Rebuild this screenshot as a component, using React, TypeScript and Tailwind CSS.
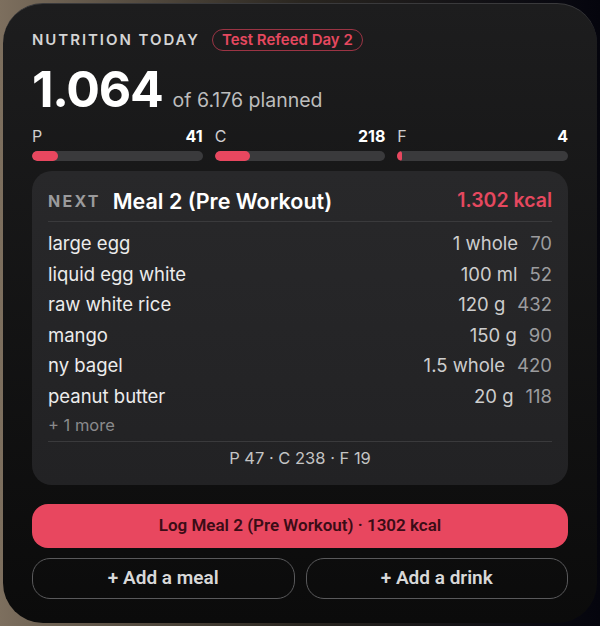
const macros = [
  { label: "P", value: 41, pct: 15 },
  { label: "C", value: 218, pct: 21 },
  { label: "F", value: 4, pct: 3 },
];

const items = [
  { name: "large egg", qty: "1 whole", kcal: 70 },
  { name: "liquid egg white", qty: "100 ml", kcal: 52 },
  { name: "raw white rice", qty: "120 g", kcal: 432 },
  { name: "mango", qty: "150 g", kcal: 90 },
  { name: "ny bagel", qty: "1.5 whole", kcal: 420 },
  { name: "peanut butter", qty: "20 g", kcal: 118 },
];

export default function App() {
  return (
    <div className="w-[600px] h-[626px] p-[3px] bg-linear-to-r from-[#7d6f5e] via-[#2a2620] to-[#05050d] font-['Inter',sans-serif]">
      <div className="h-full rounded-[40px] bg-linear-to-b from-[#1d1d1e] to-[#0b0b0b] border-t border-[#3a3a3c] px-[29px] pt-[25px]">
        {/* Header */}
        <div className="flex items-center gap-3">
          <span className="text-[15px] leading-[22px] font-semibold tracking-[0.13em] text-[#d4d4d4]">
            NUTRITION TODAY
          </span>
          <span className="h-[22px] px-[9px] flex items-center rounded-full border border-[#9b3444] text-[15px] font-semibold text-[#e5485f]">
            Test Refeed Day 2
          </span>
        </div>

        {/* Totals */}
        <div className="mt-[13px] flex items-baseline gap-[10px]">
          <span className="text-[50px] leading-[50px] font-bold text-white tracking-[-0.025em]">
            1.064
          </span>
          <span className="text-[19.5px] text-[#bdbdbd]">of 6.176 planned</span>
        </div>

        {/* Macro bars */}
        <div className="mt-[11px] grid grid-cols-3 gap-3">
          {macros.map((m) => (
            <div key={m.label}>
              <div className="flex justify-between text-[16px] leading-[20px]">
                <span className="text-[#cfcfcf]">{m.label}</span>
                <span className="font-bold text-white">{m.value}</span>
              </div>
              <div className="mt-[5px] h-[10px] rounded-full bg-[#3a3a3c] overflow-hidden">
                <div
                  className="h-full rounded-full bg-[#e8475f]"
                  style={{ width: `${m.pct}%` }}
                />
              </div>
            </div>
          ))}
        </div>

        {/* Next meal card */}
        <div className="mt-[10px] rounded-[20px] bg-linear-to-b from-[#28282a] to-[#222224] px-4 pt-[15px] pb-[15px]">
          <div className="flex items-center justify-between pb-[5px] border-b border-[#3a3a3c]">
            <div className="flex items-center gap-3">
              <span className="text-[16px] leading-[28px] font-bold tracking-[0.14em] text-[#9a9a9c]">
                NEXT
              </span>
              <span className="text-[21.5px] leading-[28px] font-semibold text-white">
                Meal 2 (Pre Workout)
              </span>
            </div>
            <span className="text-[19.5px] font-semibold text-[#e5485f]">1.302 kcal</span>
          </div>

          <div className="mt-[7px]">
            {items.map((it) => (
              <div key={it.name} className="flex items-center justify-between h-[30.6px] text-[18.5px]">
                <span className="text-[#ececec]">{it.name}</span>
                <div className="flex items-center gap-3">
                  <span className="text-[#cdcdcd]">{it.qty}</span>
                  <span className="text-[#9c9c9e] min-w-[22px] text-right">{it.kcal}</span>
                </div>
              </div>
            ))}
            <div className="h-[24px] mt-[1px] flex items-center text-[16.5px] text-[#8a8a8c]">+ 1 more</div>
          </div>

          <div className="mt-[4px] pt-[5px] border-t border-[#3a3a3c] h-[29px] flex items-center justify-center text-[16.5px] text-[#c4c4c4]">
            P 47 · C 238 · F 19
          </div>
        </div>

        {/* Actions */}
        <button className="mt-[19px] w-full h-[44px] rounded-[16px] bg-[#e8475f] text-[17px] font-semibold text-[#3b0c16] font-['Roboto',sans-serif]">
          Log Meal 2 (Pre Workout) · 1302 kcal
        </button>
        <div className="mt-[10px] grid grid-cols-2 gap-[11px]">
          <button className="h-[41px] rounded-[18px] border border-[#59595b] text-[19px] font-semibold text-[#d8d8d8] font-['Roboto',sans-serif]">
            + Add a meal
          </button>
          <button className="h-[41px] rounded-[18px] border border-[#59595b] text-[19px] font-semibold text-[#d8d8d8] font-['Roboto',sans-serif]">
            + Add a drink
          </button>
        </div>
      </div>
    </div>
  );
}
